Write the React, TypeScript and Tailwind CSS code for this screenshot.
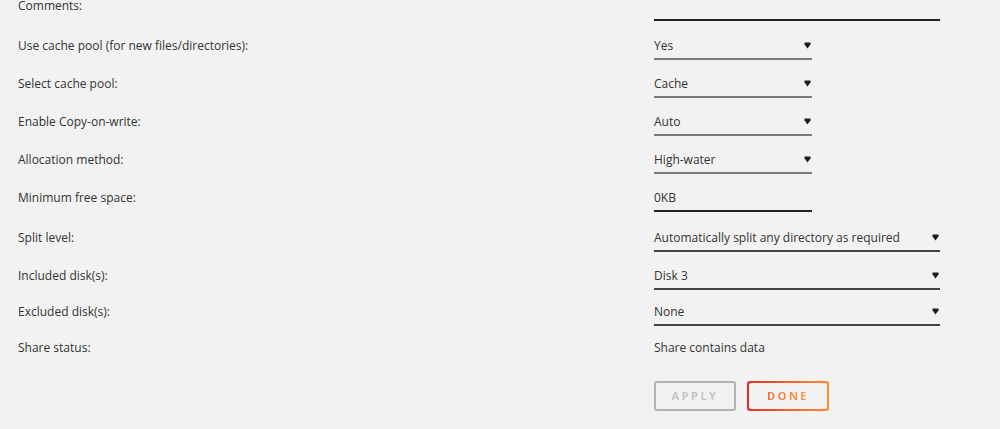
import React from 'react';

type Field = {
  label: string;
  kind: 'text' | 'select' | 'static';
  value: string;
  wide?: boolean;
  line?: string;
  row: string;
};

const fields: Field[] = [
  { label: 'Use cache pool (for new files/directories):', kind: 'select', value: 'Yes', line: 'border-[#7a7a7a]', row: 'h-[38px]' },
  { label: 'Select cache pool:', kind: 'select', value: 'Cache', line: 'border-[#7a7a7a]', row: 'h-[38px]' },
  { label: 'Enable Copy-on-write:', kind: 'select', value: 'Auto', line: 'border-[#7a7a7a]', row: 'h-[38px]' },
  { label: 'Allocation method:', kind: 'select', value: 'High-water', line: 'border-[#7a7a7a]', row: 'h-[38px]' },
  { label: 'Minimum free space:', kind: 'text', value: '0KB', line: 'border-[#222]', row: 'h-[40px]' },
  { label: 'Split level:', kind: 'select', value: 'Automatically split any directory as required', wide: true, line: 'border-[#444]', row: 'h-[38px]' },
  { label: 'Included disk(s):', kind: 'select', value: 'Disk 3', wide: true, line: 'border-[#444]', row: 'h-[36px]' },
  { label: 'Excluded disk(s):', kind: 'select', value: 'None', wide: true, line: 'border-[#444]', row: 'h-[36px]' },
  { label: 'Share status:', kind: 'static', value: 'Share contains data', row: 'h-[42px]' },
];

function Caret() {
  return (
    <svg width="7" height="7" viewBox="0 0 7 7" className="shrink-0">
      <path d="M0.5 0.5 H6.5 V2.2 L3.5 6.5 L0.5 2.2 Z" fill="#1c1c1c" />
    </svg>
  );
}

function FieldValue({ field }: { field: Field }) {
  if (field.kind === 'static') {
    return <div className="leading-[18px]">{field.value}</div>;
  }
  return (
    <div
      className={`flex items-start justify-between h-[23px] border-b-2 pr-[1px] ${field.line} ${
        field.wide ? 'w-[286px]' : 'w-[158px]'
      }`}
    >
      <span className="leading-[18px]">{field.value}</span>
      {field.kind === 'select' && (
        <span className="mt-[5px]">
          <Caret />
        </span>
      )}
    </div>
  );
}

export default function App() {
  return (
    <div
      className="w-[1000px] h-[429px] overflow-hidden bg-[#f2f2f2] text-[12px] text-[#333]"
      style={{ fontFamily: '"Open Sans", "Noto Sans", Arial, sans-serif' }}
    >
      <div className="pl-[18px]">
        {/* comments row, partly scrolled out of view */}
        <div className="flex items-start h-[37px]">
          <div className="w-[636px] leading-[12px]">Comments:</div>
          <div className="w-[286px] h-[21px] border-b-2 border-[#222]" />
        </div>

        {fields.map((field) => (
          <div key={field.label} className={`flex items-start ${field.row}`}>
            <div className="w-[636px] leading-[18px]">{field.label}</div>
            <FieldValue field={field} />
          </div>
        ))}

        {/* action buttons */}
        <div className="flex gap-[11px] pl-[636px]">
          <button className="w-[82px] h-[30px] rounded-[3px] border-2 border-[#b3b3b3] text-[11px] font-bold tracking-[2.5px] text-[#c4c4c4]">
            APPLY
          </button>
          <div className="w-[82px] h-[30px] rounded-[3px] p-[2px] bg-gradient-to-r from-[#e22828] to-[#ff8c2f]">
            <button className="w-full h-full rounded-[2px] bg-[#f2f2f2] text-[11px] font-bold tracking-[2.5px]">
              <span className="bg-gradient-to-r from-[#f2703a] to-[#ff9a45] bg-clip-text text-transparent">
                DONE
              </span>
            </button>
          </div>
        </div>
      </div>
    </div>
  );
}
